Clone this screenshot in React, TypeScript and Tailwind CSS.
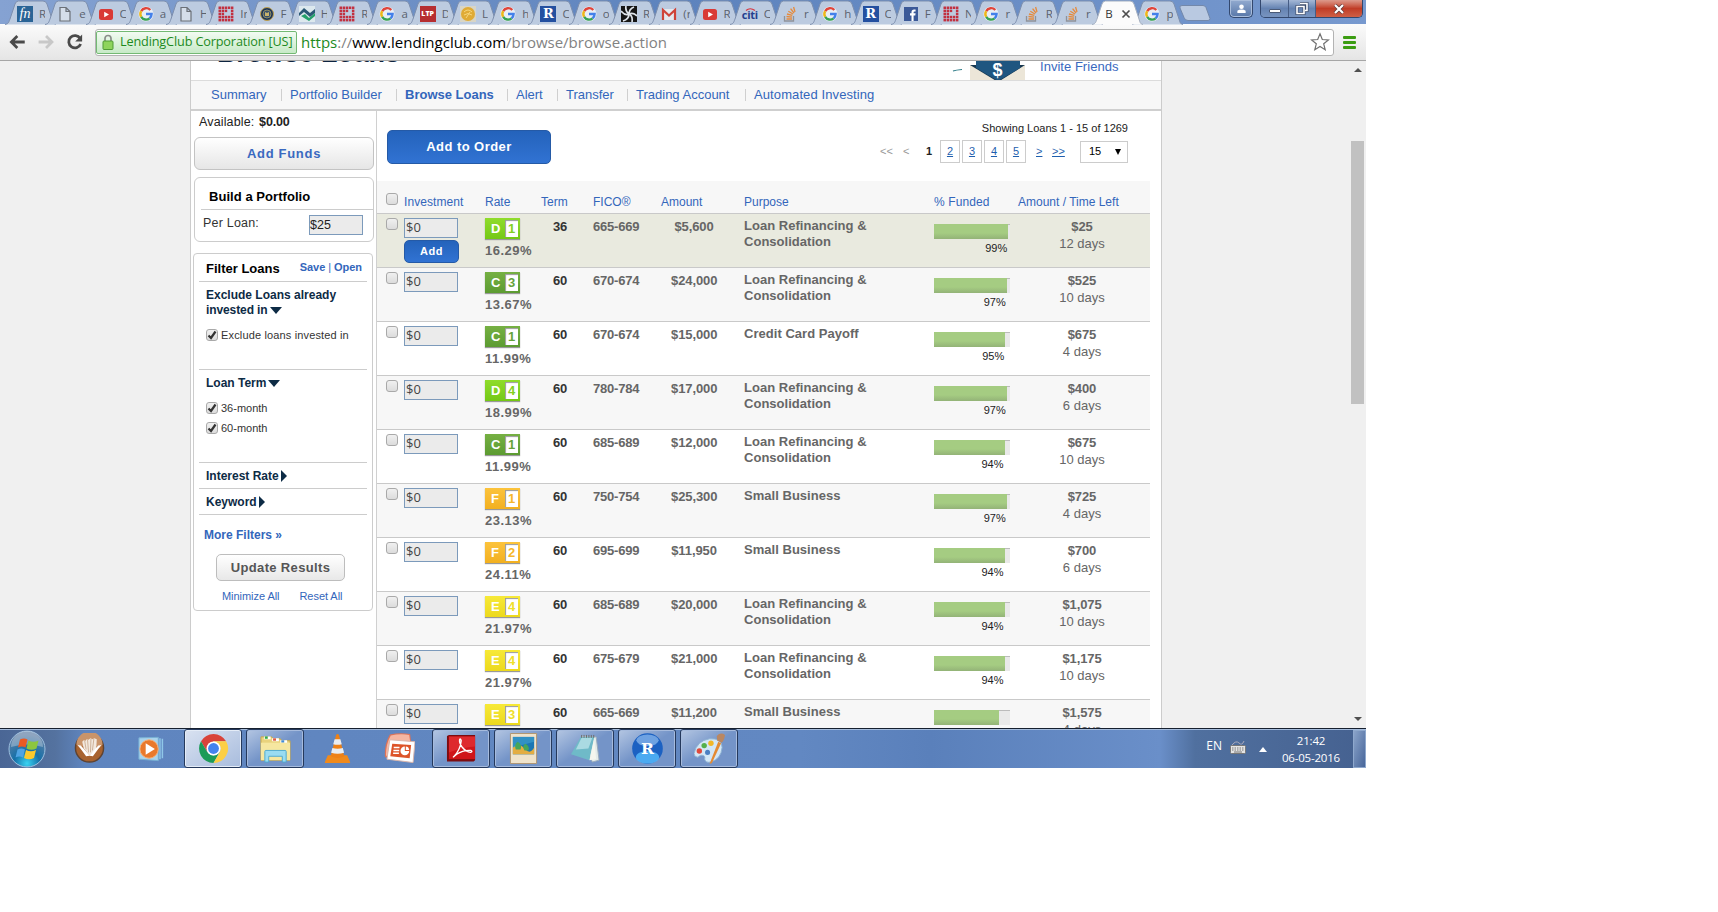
import React from 'react';

type IconName = 'fn' | 'doc' | 'yt' | 'g' | 'grid' | 'seal' | 'zig' | 'ltp' | 'coin' | 'r' | 'swirl' | 'gmail' | 'citi' | 'so' | 'fb' | 'none';

const tabs: [IconName, string][] = [
  ['fn', 'R'], ['doc', 'e'], ['yt', 'C'], ['g', 'a'], ['doc', 'H'], ['grid', 'In'], ['seal', 'F'], ['zig', 'H'], ['grid', 'R'], ['g', 'a'],
  ['ltp', 'D'], ['coin', 'L'], ['g', 'h'], ['r', 'C'], ['g', 'o'], ['swirl', 'R'], ['gmail', '(r'], ['yt', 'R'], ['citi', 'C'], ['so', 'r'],
  ['g', 'h'], ['r', 'C'], ['fb', 'F'], ['grid', 'N'], ['g', 'r|'], ['so', 'R'], ['so', 'r'], ['none', 'B'], ['g', 'p'],
];

function Favicon({ name }: { name: IconName }) {
  const svg = (children: React.ReactNode) => (
    <svg viewBox="0 0 16 16" className="h-4 w-4 shrink-0">{children}</svg>
  );
  switch (name) {
    case 'fn':
      return <span className="flex h-4 w-4 shrink-0 items-center justify-center bg-[#2a6496] font-['Liberation_Serif',serif] text-[14px] leading-4 text-white italic">fn</span>;
    case 'doc':
      return svg(<path d="M3 1.500h6l4 4v9.500h-10zM9 1.500v4h4" fill="#d5deea" stroke="#6b7077" strokeWidth="1.200" />);
    case 'yt':
      return svg(<><rect x="1" y="3" width="14" height="11" rx="2.500" fill="#d93a36" /><path d="M6.200 5.700v5.600l4.800-2.800z" fill="#fff" /></>);
    case 'g':
      return svg(
        <>
          <circle cx="8" cy="8" r="7.500" fill="#e9eef5" />
          <g fill="none" strokeWidth="2.400">
            <path d="M12.300 4A5.600 5.600 0 0 0 3.200 5.100" stroke="#e0453a" />
            <path d="M3.200 5.100a5.600 5.600 0 0 0 0 5.800" stroke="#eeb719" />
            <path d="M3.200 10.900a5.600 5.600 0 0 0 8.400 1.400" stroke="#37a354" />
            <path d="M8 8h5.600a5.600 5.600 0 0 1-2 4.300" stroke="#4380ea" />
          </g>
        </>,
      );
    case 'grid':
      return svg(
        <g fill="#c23040">
          {[0, 1, 2, 3, 4].map((row) =>
            [0, 1, 2, 3, 4].map((col) =>
              (row === 1 || row === 2) && (col === 2 || col === 3) && row + col !== 3 ? null : (
                <rect key={`${row}${col}`} x={0.5 + col * 3.1} y={0.5 + row * 3.1} width="2.500" height="2.500" />
              ),
            ),
          )}
        </g>,
      );
    case 'seal':
      return svg(<><circle cx="8" cy="8" r="6.500" fill="#1d3557" stroke="#c0a04c" /><circle cx="8" cy="8" r="4" fill="#37506b" stroke="#8f8d62" /><path d="M6 6l2 1 2-1v4H6z" fill="#c9b36b" /></>);
    case 'zig':
      return svg(<><rect width="16" height="16" fill="#dce8ee" /><path d="M0 7l5-5 6 5 5-4v4l-5 4-6-5-5 4z" fill="#2b5876" /><path d="M2 10l4-2 4 4 6-5v3l-6 5z" fill="#24a06b" /></>);
    case 'ltp':
      return <span className="flex h-4 w-4 shrink-0 items-center justify-center bg-[#b62e31] font-['Open_Sans',sans-serif] text-[7px] leading-4 font-extrabold text-white">LTP</span>;
    case 'coin':
      return svg(<><rect width="16" height="16" fill="#d8d5c6" /><circle cx="8" cy="8" r="7" fill="#e0ab35" /><path d="M4 6q4-4 8 0M4 9q4-3 8 0M6 12l4-6" stroke="#f6d67c" fill="none" /></>);
    case 'r':
      return <span className="flex h-4 w-4 shrink-0 items-center justify-center bg-[#2450a0] font-['DejaVu_Serif',serif] text-[13px] leading-4 font-bold text-white">R</span>;
    case 'swirl':
      return svg(<><rect width="16" height="16" fill="#151515" /><g fill="none" stroke="#dfe4ea" strokeWidth="1.700"><path d="M8 8Q4 5 5 0M8 8q0-5 5-7M8 8q4-2 8 2M8 8q4 2 3 8M8 8q0 5-6 7M8 8Q4 10 0 5" /></g></>);
    case 'gmail':
      return svg(<><rect x="1" y="3" width="14" height="11" fill="#e4e8ee" /><path d="M2 14V4l6 5.500L14 4v10" fill="none" stroke="#cf4338" strokeWidth="2.200" /></>);
    case 'citi':
      return (
        <span className="relative flex h-4 w-4 shrink-0 items-end justify-center font-['Open_Sans',sans-serif] text-[11px] leading-[14px] font-bold tracking-[-0.300px] text-[#24408e]">
          citi
          <svg viewBox="0 0 16 16" className="absolute inset-0 h-4 w-4"><path d="M4 4.500q4-3.500 9 0" fill="none" stroke="#d8333c" strokeWidth="1.200" /></svg>
        </span>
      );
    case 'so':
      return svg(<><path d="M2.500 10v5h9v-5" fill="none" stroke="#8f9399" strokeWidth="1.300" /><g stroke="#e58a3c" strokeWidth="1.300"><path d="M4.500 13h5.500M4.500 10.500l5.500.6M5 8l5.300 1.400M6.300 5.300L11 8M8.600 2.600L12 7M11.600 1L13 6" /></g></>);
    case 'fb':
      return svg(<><rect x="1" y="1" width="14" height="14" fill="#3b5998" /><path d="M8.500 15V9.500H7V7.300h1.500V6q0-2.600 2.600-2.600h1.500v2.200h-1.100q-.9 0-.9.9v.8h2l-.3 2.200h-1.700V15z" fill="#fff" /></>);
    default:
      return null;
  }
}

function Tab({ icon, label }: { icon: IconName; label: string }) {
  const active = icon === 'none';
  return (
    <div className={`relative h-6 w-[40.28px] shrink-0 ${active ? 'z-10' : ''}`}>
      <svg viewBox="0 0 52 25" className="absolute top-0 left-0 h-[25px] w-[52px]">
        <path
          d="M0 24.500C4 24 4 21 5 19L10 4Q11 1 13.500 1H38Q41 1 42 4L47 19C48 22 48 24 51 24.500"
          fill={active ? '#fbfbfb' : '#bccbe0'}
          stroke={active ? '#a4afc0' : '#7d8fae'}
          strokeWidth="1"
        />
      </svg>
      <div className={`relative flex h-6 items-center pt-1 font-['Open_Sans',sans-serif] text-[11.500px] ${active ? 'pl-[13px] text-[#333]' : 'gap-1.5 pl-3 text-[#5a626e]'}`}>
        <Favicon name={icon} />
        <span className={active ? '' : 'w-[8px] overflow-hidden whitespace-nowrap'}>{label}</span>
        {active && (
          <svg viewBox="0 0 10 10" className="ml-[8px] h-2.5 w-2.5 shrink-0"><path d="M1.500 1.500l7 7M8.500 1.500l-7 7" stroke="#4d4d4d" strokeWidth="1.700" /></svg>
        )}
      </div>
    </div>
  );
}

function WindowButtons() {
  return (
    <div className="ml-auto flex items-start pr-[3px]">
      <div className="mr-[7px] flex h-[18px] w-6 items-center justify-center rounded-b-[5px] border border-t-0 border-[#33486e] bg-linear-to-b from-[#93abd0] to-[#5877a8] shadow-[inset_0_0_0_1px_#a9bddb]">
        <svg viewBox="0 0 12 12" className="h-[11px] w-[11px]"><circle cx="6" cy="4" r="2.500" fill="#fff" /><path d="M1.500 11V8.500Q3 7 6 7t4.500 1.500V11z" fill="#fff" /></svg>
      </div>
      <div className="flex h-[18px] overflow-hidden rounded-b-[5px] border border-t-0 border-[#33486e]">
        <div className="flex w-[28px] items-center justify-center border-r border-[#465d85] bg-linear-to-b from-[#a5b8d6] via-[#6583b2] to-[#7894bf] pt-1">
          <span className="h-1 w-3 rounded-[1px] border border-[#4a5a77] bg-white" />
        </div>
        <div className="flex w-[27px] items-center justify-center border-r border-[#465d85] bg-linear-to-b from-[#a5b8d6] via-[#6583b2] to-[#7894bf]">
          <svg viewBox="0 0 14 13" className="h-[13px] w-3.5"><path d="M5 1.500h7v7h-2M2 4.500h7v7H2z" fill="none" stroke="#3c4d6d" strokeWidth="3" /><path d="M5 1.500h7v7h-2M2 4.500h7v7H2z" fill="none" stroke="#fff" strokeWidth="1.600" /></svg>
        </div>
        <div className="flex w-[46px] items-center justify-center bg-linear-to-b from-[#dc9a8c] via-[#c03c26] to-[#cf5f45]">
          <svg viewBox="0 0 12 10" className="h-2.5 w-3"><path d="M2 1l8 8M10 1L2 9" stroke="#5e3a3a" strokeWidth="3.600" /><path d="M2 1l8 8M10 1L2 9" stroke="#fff" strokeWidth="2.200" /></svg>
        </div>
      </div>
    </div>
  );
}

function Toolbar() {
  return (
    <div className="flex h-[37px] shrink-0 items-center border-b border-[#a6a6a6] bg-linear-to-b from-[#fbfbfb] to-[#e5e5e5] font-['Open_Sans',sans-serif]">
      <svg viewBox="0 0 96 36" className="h-9 w-[95px] shrink-0" fill="none">
        <path d="M25 18H12M17.500 12L11.500 18l6 6" stroke="#4a4a4a" strokeWidth="2.800" />
        <path d="M39 18h13M46.500 12l6 6-6 6" stroke="#c8c8c8" strokeWidth="2.800" />
        <path d="M81 14.500A6.200 6.200 0 1 0 81.500 20" stroke="#4a4a4a" strokeWidth="2.800" />
        <path d="M83 10.500v7h-7z" fill="#4a4a4a" />
      </svg>
      <div className="flex h-[27px] w-[1239px] items-center rounded-[3px] border border-[#b3b3b3] bg-white">
        <div className="flex h-[23px] w-[201px] shrink-0 items-center rounded-[2px] border border-[#73b973] bg-linear-to-b from-[#f2fbf2] to-[#c7eac7] pl-[5px]">
          <svg viewBox="0 0 12 16" className="h-4 w-3"><path d="M3 8V4.500a3 3 0 0 1 6 0V8" fill="none" stroke="#8a8f8a" strokeWidth="1.700" /><rect x="1" y="7" width="10" height="8.500" rx="1" fill="#8ed45c" stroke="#4f9b35" /></svg>
          <span className="pl-[6px] text-[12.700px] tracking-[-0.150px] whitespace-nowrap text-[#1d8a1d]">LendingClub Corporation [US]</span>
        </div>
        <span className="pl-[4px] text-[15px] whitespace-nowrap text-[#828282]">
          <span className="text-[#1d8a1d]">https</span>://<span className="text-black">www.lendingclub.com</span>/browse/browse.action
        </span>
        <svg viewBox="0 0 20 20" className="mr-[3px] ml-auto h-5 w-5"><path d="M10 1.800l2.300 5.700 6.100.4-4.700 3.900 1.500 6L10 14.500 4.800 17.800l1.500-6L1.600 7.900l6.100-.4z" fill="#fff" stroke="#707070" strokeWidth="1.200" /></svg>
      </div>
      <div className="ml-[9px] flex flex-col gap-[2px]">
        {[0, 1, 2].map((i) => <span key={i} className="h-[3px] w-[13px] rounded-[1px] bg-[#3c9d12]" />)}
      </div>
    </div>
  );
}

const navItems = [
  { label: 'Summary', cls: 'w-[70px]' },
  { label: 'Portfolio Builder', cls: 'w-[115px]' },
  { label: 'Browse Loans', cls: 'w-[111px] font-bold' },
  { label: 'Alert', cls: 'w-[50px]' },
  { label: 'Transfer', cls: 'w-[70px]' },
  { label: 'Trading Account', cls: 'w-[118px]' },
  { label: 'Automated Investing', cls: 'w-[132px] tracking-[0.100px]' },
];

function Masthead() {
  return (
    <div className="shrink-0">
      <div className="flex h-[19px] overflow-hidden">
        <h1 className="mt-[-24px] w-[759px] pl-[26px] text-[27px] leading-[32px] font-bold tracking-[-0.150px] text-[#0d2440]">Browse Loans</h1>
        <svg viewBox="0 0 80 22" className="h-[22px] w-20 shrink-0">
          <path d="M3 10q3-1 9-1.500" stroke="#2c7a86" strokeWidth="1.200" fill="none" />
          <path d="M20 4h55v18H20z" fill="#ece6d8" />
          <path d="M20 4h55L48 21z" fill="#183850" />
          <path d="M26 0h44v7L48 20 26 7z" fill="#1f5680" />
          <text x="47.500" y="15" textAnchor="middle" fontFamily="Liberation Sans" fontWeight="700" fontSize="18" fill="#fff">$</text>
        </svg>
        <span className="pl-[10px] text-[13px] leading-3 tracking-[0.030px] text-[#3a69c0]">Invite Friends</span>
      </div>
      <div className="flex h-[31px] items-center border-t border-b-2 border-t-[#dcdcdc] border-b-[#cfcfcf] bg-[#f7f7f7] pl-[20px] text-[13px] text-[#3366bb]">
        {navItems.map((n, i) => (
          <div key={n.label} className={`flex shrink-0 items-center whitespace-nowrap ${n.cls}`}>
            {i > 0 && <span className="mr-2 h-3 w-px bg-[#cfcfcf]" />}
            <span>{n.label}</span>
          </div>
        ))}
      </div>
    </div>
  );
}

function Check({ checked = false }: { checked?: boolean }) {
  return (
    <span className="flex h-3 w-3 shrink-0 items-center justify-center rounded-[3px] border border-[#a9a9a9] bg-linear-to-b from-[#f0f0f0] to-[#dcdcdc]">
      {checked && <svg viewBox="0 0 10 10" className="h-2.5 w-2.5"><path d="M1.500 5.500L4 8l4.500-6.500" fill="none" stroke="#333" strokeWidth="2.200" /></svg>}
    </span>
  );
}

const Down = () => <svg viewBox="0 0 12 7" className="ml-0.5 inline-block h-[7px] w-3"><path d="M0 0h12L6 7z" fill="#0d2b45" /></svg>;
const Right = () => <svg viewBox="0 0 6 12" className="ml-0.5 inline-block h-3 w-1.5"><path d="M0 0v12l6-6z" fill="#0d2b45" /></svg>;

function Sidebar() {
  return (
    <aside className="w-[186px] shrink-0 border-r border-[#d0d0d0] pl-[3px] text-[#222]">
      <div className="h-[26px] pl-[5px] text-[12.500px] leading-[22px] tracking-[0.150px]">Available: <b className="pl-px tracking-[-0.150px]">$0.00</b></div>
      <div className="flex h-[33px] w-[180px] items-center justify-center rounded-md border border-[#c3c3c3] bg-linear-to-b from-white to-[#e6e6e6] text-[13px] font-bold tracking-[0.700px] text-[#3a69c0]">Add Funds</div>
      <div className="mt-[7px] h-[65px] w-[180px] rounded-md border border-[#cccccc]">
        <div className="ml-[6px] h-[32px] border-b border-[#ccc] pl-[8px] text-[13px] leading-[37px] font-bold tracking-[0.050px] text-black">Build a Portfolio</div>
        <div className="flex justify-between pr-[10px] pl-[8px]">
          <span className="text-[12.500px] leading-[27px] tracking-[0.200px] text-[#333]">Per Loan:</span>
          <span className="mt-[5px] h-5 w-[54px] border border-[#7c9abb] bg-[#ebebeb] text-[12.500px] leading-[18px]">$25</span>
        </div>
      </div>
      <div className="mt-[11px] ml-[-1px] h-[358px] w-[180px] rounded-sm border border-[#ccc] px-[5px] text-[#0d2b45]">
        <div className="flex h-[28px] justify-between border-b border-[#ccc] pr-[5px] pl-[7px] leading-[29px] font-bold">
          <span className="text-[13px] text-black">Filter Loans</span>
          <span className="text-[11px] leading-[27px] tracking-[-0.050px] text-[#3366bb]">Save <span className="font-normal">|</span> Open</span>
        </div>
        <div className="h-[88px] border-b border-[#ccc] pl-[7px]">
          <div className="pt-[6px] text-[12px] leading-[15px] font-bold">Exclude Loans already<br /><span className="tracking-[-0.100px]">invested in</span><Down /></div>
          <div className="mt-[9px] flex items-center gap-[3px] text-[11px] tracking-[0.150px] text-[#333]"><Check checked />Exclude loans invested in</div>
        </div>
        <div className="h-[93px] border-b border-[#ccc] pl-[7px]">
          <div className="pt-[6px] text-[12px] leading-[15px] font-bold">Loan Term<Down /></div>
          <div className="mt-[9px] flex h-4 items-center gap-[3px] text-[11px] text-[#333]"><Check checked />36-month</div>
          <div className="mt-[4px] flex h-4 items-center gap-[3px] text-[11px] text-[#333]"><Check checked />60-month</div>
        </div>
        <div className="flex h-[26px] items-center border-b border-[#ccc] pl-[7px] text-[12px] font-bold">Interest Rate<Right /></div>
        <div className="flex h-[26px] items-center border-b border-[#ccc] pl-[7px] text-[12px] font-bold">Keyword<Right /></div>
        <div className="pt-[12px] pl-[5px] text-[12px] leading-[16px] font-bold text-[#3366bb]">More Filters »</div>
        <div className="mt-[11px] ml-[17px] flex h-[27px] w-[129px] items-center justify-center rounded-[5px] border border-[#bdbdbd] bg-linear-to-b from-white to-[#e8e8e8] text-[13px] font-bold tracking-[0.350px] text-[#555]">Update Results</div>
        <div className="mt-[8px] flex gap-[20px] pl-[23px] text-[11px] leading-[14px] tracking-[-0.050px] text-[#3366bb]"><span>Minimize All</span><span>Reset All</span></div>
      </div>
    </aside>
  );
}

type Loan = { grade: string; sub: number; rate: string; term: number; fico: string; amount: string; purpose: string; pct: number; left: string; days: number };
const refi = 'Loan Refinancing & Consolidation';
const loans: Loan[] = [
  { grade: 'D', sub: 1, rate: '16.29%', term: 36, fico: '665-669', amount: '$5,600', purpose: refi, pct: 99, left: '$25', days: 12 },
  { grade: 'C', sub: 3, rate: '13.67%', term: 60, fico: '670-674', amount: '$24,000', purpose: refi, pct: 97, left: '$525', days: 10 },
  { grade: 'C', sub: 1, rate: '11.99%', term: 60, fico: '670-674', amount: '$15,000', purpose: 'Credit Card Payoff', pct: 95, left: '$675', days: 4 },
  { grade: 'D', sub: 4, rate: '18.99%', term: 60, fico: '780-784', amount: '$17,000', purpose: refi, pct: 97, left: '$400', days: 6 },
  { grade: 'C', sub: 1, rate: '11.99%', term: 60, fico: '685-689', amount: '$12,000', purpose: refi, pct: 94, left: '$675', days: 10 },
  { grade: 'F', sub: 1, rate: '23.13%', term: 60, fico: '750-754', amount: '$25,300', purpose: 'Small Business', pct: 97, left: '$725', days: 4 },
  { grade: 'F', sub: 2, rate: '24.11%', term: 60, fico: '695-699', amount: '$11,950', purpose: 'Small Business', pct: 94, left: '$700', days: 6 },
  { grade: 'E', sub: 4, rate: '21.97%', term: 60, fico: '685-689', amount: '$20,000', purpose: refi, pct: 94, left: '$1,075', days: 10 },
  { grade: 'E', sub: 4, rate: '21.97%', term: 60, fico: '675-679', amount: '$21,000', purpose: refi, pct: 94, left: '$1,175', days: 10 },
  { grade: 'E', sub: 3, rate: '', term: 60, fico: '665-669', amount: '$11,200', purpose: 'Small Business', pct: 86, left: '$1,575', days: 4 },
];

const gradeColors: Record<string, { box: string; text: string }> = {
  C: { box: 'bg-linear-to-b from-[#76b043] to-[#5c9b31]', text: 'text-[#66a33a]' },
  D: { box: 'bg-linear-to-b from-[#90dc2c] to-[#74c814]', text: 'text-[#84d022]' },
  E: { box: 'bg-linear-to-b from-[#f7e938] to-[#ecd91c]', text: 'text-[#efdf2c]' },
  F: { box: 'bg-linear-to-b from-[#fcc33c] to-[#f2b01f]', text: 'text-[#f6b62c]' },
};

const columns = 'grid grid-cols-[27px_81px_57px_51px_78px_73px_190px_80px_136px]';

function LoanRow({ loan, index }: { loan: Loan; index: number }) {
  const c = gradeColors[loan.grade];
  const bg = index === 0 ? 'bg-[#e9eadf]' : index % 2 ? 'bg-[#f7f7f7]' : 'bg-white';
  return (
    <div className={`${columns} h-[54px] shrink-0 items-start overflow-hidden border-b border-[#c9c9c9] text-[13px] font-bold text-[#666] ${bg}`}>
      <div className="pt-1 pl-[9px]"><Check /></div>
      <div className="pt-1">
        <div className="h-5 w-[54px] border border-[#7c9abb] bg-[#ebebeb] pl-px font-['Open_Sans',sans-serif] text-[13px] leading-[17px] font-normal text-[#444]">$0</div>
        {index === 0 && <div className="mt-[2px] flex h-[23px] w-[55px] items-center justify-center rounded-[5px] border border-[#255aa6] bg-linear-to-b from-[#2463bb] to-[#3173d3] text-[11px] tracking-[0.500px] text-white">Add</div>}
      </div>
      <div className="pt-1">
        <div className={`flex h-[21px] w-[35px] p-[2px] pl-[3px] shadow-[0_1px_1px_#999] ${c.box}`}>
          <span className="w-[17px] pl-[3px] text-[13px] leading-[17px] text-white">{loan.grade}</span>
          <span className={`w-[13px] bg-white text-center text-[13px] leading-[17px] shadow-[inset_1px_1px_1px_#999] ${index === 0 ? 'bg-[#e9eadf]' : 'bg-white'} ${c.text}`}>{loan.sub}</span>
        </div>
        <div className="pt-[4px] leading-4 tracking-[0.500px]">{loan.rate}</div>
      </div>
      <div className="pt-[5px] pl-[11px] leading-4 tracking-[-0.300px] text-[#333]">{loan.term}</div>
      <div className="pt-[5px] leading-4 tracking-[-0.200px]">{loan.fico}</div>
      <div className="w-[46px] pt-[5px] text-center leading-4 tracking-[-0.100px]">{loan.amount}</div>
      <div className="w-[150px] pt-1 leading-4 tracking-[0.030px]">{loan.purpose}</div>
      <div className="pt-[10px]">
        <div className="h-[15px] w-[76px] border-t border-[#bbb] bg-[#e9e9e9]">
          <div className="mt-[-1px] h-[15px] bg-linear-to-b from-[#a5cc82] from-60% to-[#93b377]" style={{ width: `${loan.pct * 0.75}px` }} />
        </div>
        <div className="pt-[2px] text-right text-[11px] leading-[14px] font-normal text-[#222]" style={{ width: `${loan.pct * 0.75 - 1}px` }}>{loan.pct}%</div>
      </div>
      <div className="text-center">
        <div className="pt-[5px] leading-4 tracking-[-0.100px]">{loan.left}</div>
        <div className="leading-[18px] font-normal">{loan.days} days</div>
      </div>
    </div>
  );
}

function Main() {
  return (
    <main className="flex w-[773px] shrink-0 flex-col">
      <div className="flex h-[70px] shrink-0 justify-between pr-[22px] pl-[10px]">
        <div className="mt-[19px] flex h-[34px] w-[164px] items-center justify-center rounded-[5px] border border-[#255aa6] bg-linear-to-b from-[#2463bb] to-[#3173d3] text-[13px] font-bold tracking-[0.450px] text-white">Add to Order</div>
        <div className="flex w-[260px] flex-col items-end">
          <div className="pt-[10px] text-[11px] leading-[14px] text-[#222]">Showing Loans 1 - 15 of 1269</div>
          <div className="mt-[5px] flex h-[23px] items-center text-[11px] text-[#1f5fae]">
            <span className="w-[23px] text-[#999]">&lt;&lt;</span>
            <span className="w-[23px] text-[#999]">&lt;</span>
            <span className="w-[14px] font-bold text-[#222]">1</span>
            {[2, 3, 4, 5].map((n) => (
              <span key={n} className="mr-[2px] flex h-[23px] w-5 items-center justify-center border border-[#ccc] underline">{n}</span>
            ))}
            <span className="ml-[8px] w-[8px] underline">&gt;</span>
            <span className="ml-[8px] w-[28px] underline">&gt;&gt;</span>
            <span className="flex h-[22px] w-12 items-center justify-between border border-[#ccc] pr-[6px] pl-[8px] text-black">15
              <svg viewBox="0 0 6 6" className="h-1.5 w-1.5"><path d="M0 0h6L3 6z" /></svg>
            </span>
          </div>
        </div>
      </div>
      <div className={`${columns} h-[33px] shrink-0 border-b border-[#c9c9c9] bg-[#f7f7f7] text-[12px] leading-[42px] whitespace-nowrap text-[#3366bb]`}>
        <div className="pt-3 pl-[9px]"><Check /></div>
        <div className="tracking-[0.080px]">Investment</div>
        <div>Rate</div>
        <div className="ml-[-1px]">Term</div>
        <div>FICO®</div>
        <div className="ml-[-10px]">Amount</div>
        <div>Purpose</div>
        <div className="tracking-[0.100px]">% Funded</div>
        <div className="pl-[4px]">Amount / Time Left</div>
      </div>
      {loans.map((l, i) => <LoanRow key={i} loan={l} index={i} />)}
    </main>
  );
}

function StartOrb() {
  return (
    <svg viewBox="0 0 40 40" className="h-10 w-10">
      <defs>
        <radialGradient id="orb" cx=".5" cy=".9" r=".8"><stop offset="0" stopColor="#38d3f2" /><stop offset=".45" stopColor="#1670a8" /><stop offset="1" stopColor="#5f7fa5" /></radialGradient>
      </defs>
      <circle cx="20" cy="20" r="18" fill="url(#orb)" stroke="#9fc0df" />
      <path d="M4 18a16 16 0 0 1 32 0q-16-5-32 0z" fill="#fff" opacity=".3" />
      <path d="M13 10.500q4-2 7.500 0l-2 8q-3.500-2-7.500 0z" fill="#ea5a24" />
      <path d="M21.500 11.500q5 2.500 10 0l-2 8q-5 2.500-10 0z" fill="#8cc63f" />
      <path d="M10.500 20.500q4-2 7.500 0l-2 8q-3.500-2-7.500 0z" fill="#4fa3e3" />
      <path d="M19 21q5 2.500 10 0l-2 8q-5 2.500-10 0z" fill="#fbc92c" />
    </svg>
  );
}

const taskIcons: { key: string; open: number; art: React.ReactNode }[] = [
  { key: 'books', open: 0, art: <><circle cx="16" cy="15.500" r="14.500" fill="#a8622e" stroke="#5f4331" strokeWidth="1.500" /><path d="M2.500 12a13.500 13.500 0 0 1 27 0q-13 5-27 0z" fill="#c9946a" /><path d="M8.500 9l1.500-1.500L12 8l1-1.500L15 7l2-1.500 2 1 2-1 2.500 1L23 16l-7 7-6-7z" fill="#f3e9df" /><path d="M11 8l1.500 9M14 7l1 13M17.500 6l-.5 14M20.500 6L19 18" stroke="#c4a284" strokeWidth=".8" /><path d="M3.500 12.500L7 13l9 10 9-10 3.500-.5-3.500 4-5.500 7.500q-3.500-1-7 0L7 16.500z" fill="#fff" /></> },
  { key: 'media', open: 0, art: <><path d="M3 5l20-.5v24L3 27z" fill="#a9d3ec" stroke="#77b0d3" /><path d="M24 5.500h1.500v21.500H24zM26.500 6H28v20h-1.500z" fill="#8fc7e8" /><circle cx="13.500" cy="16.500" r="9.500" fill="#e9792c" stroke="#f6b27a" /><path d="M10 10.500v12l9.500-6z" fill="#fff" /></> },
  { key: 'chrome', open: 2, art: <><path d="M3.100 8.500A15 15 0 0 1 29 8.500H16L9.500 19.700z" fill="#d9433a" /><path d="M3.100 8.500L9.500 19.700Q16 27 22.500 19.700L16 31A15 15 0 0 1 3.100 8.500z" fill="#1c9b58" /><path d="M29 8.500A15 15 0 0 1 16 31l6.500-11.300Q26 12 16 8.500z" fill="#fdcf45" /><circle cx="16" cy="16" r="7.200" fill="#fff" /><circle cx="16" cy="16" r="5.600" fill="#4483ee" /></> },
  { key: 'files', open: 1, art: <><path d="M1 4h11l1.500 2H21l1.500 2H31v20H1z" fill="#e9d27c" stroke="#c7a948" /><path d="M4 3.500h7v3H4zM12.500 5.500h7v3h-7zM21 7.500h7v3h-7z" fill="#fff" /><path d="M5 3.500h3v2.500H5z" fill="#36a84a" /><path d="M13.500 5.500h3V8h-3z" fill="#df5a45" /><path d="M22 7.500h3V10h-3z" fill="#408bd5" /><path d="M1 10h30v18H1z" fill="#f6e7a0" /><path d="M5 19q0-1 1-1h20q1 0 1 1v11h-4v-6H9v6H5z" fill="#9adcf2" stroke="#4fa9cf" /></> },
  { key: 'vlc', open: 0, art: <><path d="M3 30l3-7h20l3 7v1H3z" fill="#f08a1c" /><path d="M14.500 2q1.500-2 3 0L23 24q-7 3.500-14 0z" fill="#ee8117" /><path d="M13 6.500h6l1.400 5q-4.400 1.500-8.800 0zM10.700 15.500q5.500 1.500 10.800 0l1.300 5q-6.800 2-13.400 0z" fill="#e9edf2" /></> },
  { key: 'slides', open: 0, art: <><path d="M6 1.500Q16-.5 27 1l1 8-3 17L1 25Q0 12 6 1.500z" fill="#dc7358" /><path d="M7 2.500Q17 .5 26 2l1 7L7 8 3 24 2 23Q2 11 7 2.500z" fill="#f5b6a2" /><path d="M6 7l26 2-2 21.500L3 27z" fill="#fff" stroke="#d9b5aa" /><path d="M8.500 11L28 12.500 26.500 26 6.500 24z" fill="#dd5429" /><path d="M10 15h6M9.700 18h6M9.400 21h6" stroke="#fff" strokeWidth="1.500" /><circle cx="21.500" cy="18.500" r="4.500" fill="#fff" /><path d="M21.500 18.500V13l5 1v4.500z" fill="#dd5429" /><path d="M22.500 17.500v-3.500q3 0 3.500 3.500z" fill="#fff" /></> },
  { key: 'pdf', open: 1, art: <><path d="M1 3l2-1h27v26l-1.500 1.500H1z" fill="#7d0c10" /><path d="M3 3.500h27V27H3z" fill="#cf1519" /><path d="M3 3.500h27V14q-14 1-27 6z" fill="#e8373a" opacity=".6" /><path d="M8 24.500Q15 17 15.700 8q-.7-3-1.700-1-.5 3 3 8 3.500 4.500 8.500 5 2.500-1 0-2-8-.5-14.500 4-4.500 3.500-3 2.500z" fill="none" stroke="#fff" strokeWidth="1.400" /></> },
  { key: 'photo', open: 1, art: <><path d="M2.500 .5h27v31h-27z" fill="#efe3cb" stroke="#b09570" /><path d="M5 4h22v18H5z" fill="#1c77b3" /><path d="M5 15q6-6 12 1t10-1v7H5z" fill="#e3ad42" /><path d="M5 4h22v5q-11 3-22 6z" fill="#3fa3cf" opacity=".6" /><path d="M8 17q-2-5 2-8 5 3 3 8zM17 18q-3-5 1-7 5 3 3 7z" fill="#45a65a" /></> },
  { key: 'notes', open: 1, art: <><path d="M12 3l15 1 3 24-7 2z" fill="#e3ebe9" stroke="#9ab" /><path d="M11 4h14L20 28 1 22z" fill="#6fbac8" /><path d="M12 5h11l-4 11L6 17z" fill="#c3e8ec" opacity=".7" /><path d="M20 28l5-22 2 21z" fill="#f4f6ee" /><path d="M12 2v3M14.500 2v3M17 2v3M19.500 2v3M22 2v3M24.500 2v3" stroke="#6b6b6b" /></> },
  { key: 'r', open: 1, art: <><circle cx="16" cy="16" r="15.800" fill="#1c61c2" /><ellipse cx="16" cy="25" rx="12" ry="6.500" fill="#58bdfc" opacity=".8" /><ellipse cx="16" cy="7.500" rx="11.500" ry="6" fill="#a5cdf6" opacity=".6" /><text x="16" y="21.500" textAnchor="middle" fontFamily="DejaVu Serif" fontWeight="700" fontSize="16" fill="#fff">R</text></> },
  { key: 'paint', open: 1, art: <><path d="M0 21Q3 8 16 6q13-1 13 9-1 12-12 15-5 1-6-3 1-4-3-4-2 0-4 2-4 0-4-4z" fill="#d3e7f6" stroke="#8fb4d3" /><circle cx="5.500" cy="18.500" r="2.800" fill="#df4a3c" /><circle cx="10.500" cy="13" r="2.800" fill="#54b04b" /><circle cx="17.500" cy="10.500" r="2.800" fill="#f2b727" /><circle cx="14" cy="20" r="2.600" fill="#4a7fc2" /><path d="M25 9l3 1.500L18.500 31l-2.500 1z" fill="#e48a32" /><path d="M23.500 3q4-4.500 8.500-1-1 6-3.500 8L24 8z" fill="#b98763" /></> },
];

function Taskbar() {
  return (
    <footer className="flex h-10 shrink-0 items-center border-t border-[#16202f] bg-linear-[90deg,#4a6695_0px,#54729f_55px,#5f85bf_85px,#6288c2_800px,#5a80bb_930px,#6a8fc9_1160px,#50709f_1195px,#456190_1366px] shadow-[inset_0_1px_0_#a5bcdc]">
      <div className="w-[60px] pl-[7px]"><StartOrb /></div>
      <div className="flex h-full gap-1">
        {taskIcons.map((t) => (
          <div
            key={t.key}
            className={`flex h-[39px] w-[58px] items-center justify-center rounded-[3px] ${
              t.open === 2
                ? 'border border-[#25395c] bg-linear-to-br from-[#d9e2f1] to-[#a8bcdd] shadow-[inset_0_0_0_1px_#e4ecf7]'
                : t.open === 1
                  ? 'border border-[#25395c] bg-linear-to-br from-[#b4c6e2] via-[#7494c8] to-[#7494c8] shadow-[inset_0_0_0_1px_#a6bbdd]'
                  : ''
            }`}
          >
            <svg viewBox="0 0 32 32" className="h-[31px] w-[31px]">{t.art}</svg>
          </div>
        ))}
      </div>
      <div className="ml-auto flex h-full items-center font-['Open_Sans',sans-serif] text-white">
        <span className="pb-[5px] text-[12px] leading-4">EN</span>
        <svg viewBox="0 0 16 14" className="mb-1 ml-2 h-3.5 w-4"><path d="M2 5q4-5 7-2t5-2" fill="none" stroke="#aab" /><rect x=".5" y="5.500" width="15" height="8" rx="1" fill="#e4e4e4" stroke="#777" /><path d="M2 8h12M2 10h12" stroke="#777" strokeDasharray="1.500 1" /><path d="M4 12h8" stroke="#777" /></svg>
        <svg viewBox="0 0 8 5" className="mt-px ml-[13px] h-[5px] w-2"><path d="M0 5h8L4 0z" fill="#fff" /></svg>
        <div className="ml-[13px] w-[62px] text-center text-[11.500px] leading-[17px] tracking-[-0.200px]">21:42<br />06-05-2016</div>
        <div className="ml-[11px] h-[38px] w-[13px] border border-[#8ea8cd] bg-linear-to-br from-[#8aa3c9] to-[#48669a]" />
      </div>
    </footer>
  );
}

export default function App() {
  return (
    <div className="h-[912px] w-[1718px] overflow-hidden bg-white">
      <div className="flex h-[768px] w-[1366px] flex-col overflow-hidden">
        <header className="flex h-6 shrink-0 bg-linear-to-r from-[#85a2d2] via-[#5d83bd] to-[#7799cf] pl-[5px]">
          {tabs.map(([icon, label], i) => <Tab key={i} icon={icon} label={label} />)}
          <svg viewBox="0 0 32 16" className="mt-[5px] ml-[6px] h-4 w-8"><path d="M1 3Q0 .5 3 .5h21q2 0 3 2l4 11q0 2-2 2H9q-3 0-4-3z" fill="#b9c9e1" stroke="#7388aa" /></svg>
          <WindowButtons />
        </header>
        <Toolbar />
        <div className="flex min-h-0 flex-1 bg-[#f0f0f0] font-['Liberation_Sans',Arial,sans-serif]">
          <div className="ml-[190px] flex w-[972px] shrink-0 flex-col overflow-hidden border-x border-[#ccc] bg-white">
            <Masthead />
            <div className="flex min-h-0 flex-1 overflow-hidden">
              <Sidebar />
              <Main />
            </div>
          </div>
          <div className="mr-px ml-auto flex w-[15px] flex-col items-center">
            <svg viewBox="0 0 8 4" className="mt-[7px] h-1 w-2 shrink-0"><path d="M0 4h8L4 0z" fill="#505050" /></svg>
            <div className="mt-[69px] h-[263px] w-[13px] shrink-0 bg-[#c1c1c1]" />
            <svg viewBox="0 0 8 4" className="mt-auto mb-[7px] h-1 w-2 shrink-0"><path d="M0 0h8L4 4z" fill="#505050" /></svg>
          </div>
        </div>
        <Taskbar />
      </div>
    </div>
  );
}
